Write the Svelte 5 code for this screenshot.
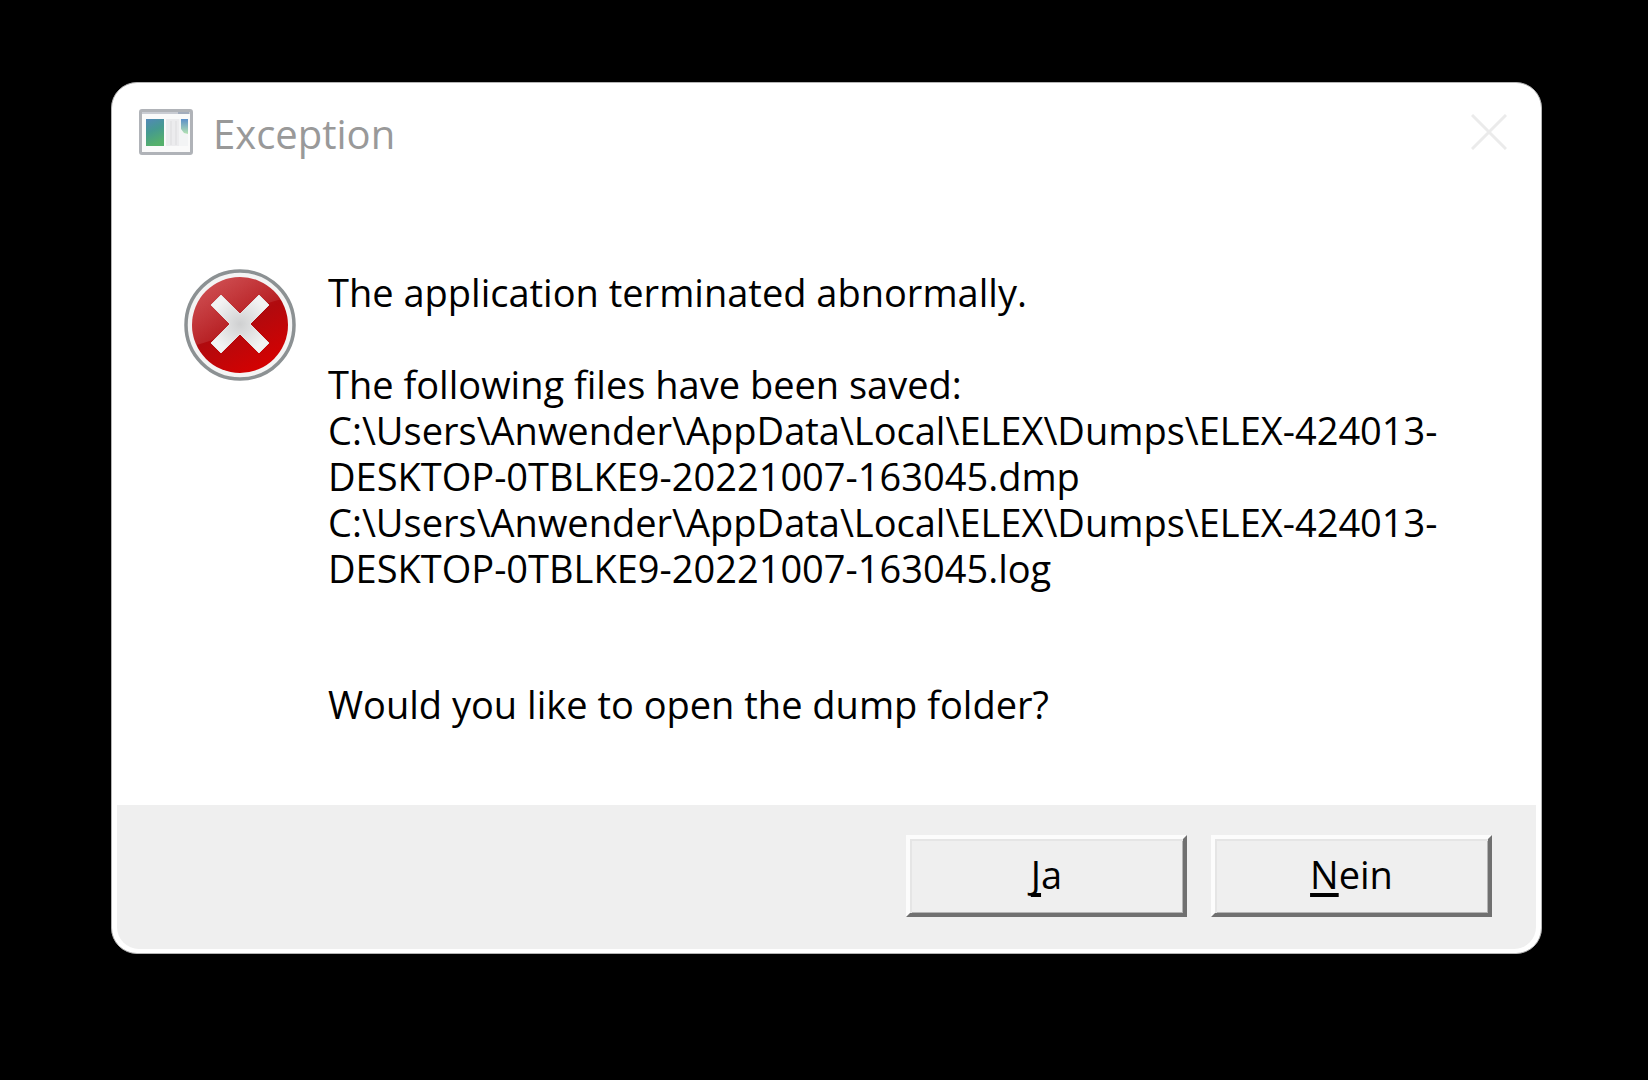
<script lang="ts">
    let open = $state(true);

    const files = [
        ['C:\\Users\\Anwender\\AppData\\Local\\ELEX\\Dumps\\ELEX-424013-', 'DESKTOP-0TBLKE9-20221007-163045.dmp'],
        ['C:\\Users\\Anwender\\AppData\\Local\\ELEX\\Dumps\\ELEX-424013-', 'DESKTOP-0TBLKE9-20221007-163045.log'],
    ];

    function close() {
        open = false;
    }
</script>

{#if open}
    <div class="dialog" role="alertdialog" aria-labelledby="title" aria-describedby="message">
        <header>
            <svg class="app-icon" viewBox="0 0 54 46" aria-hidden="true">
                <defs>
                    <linearGradient id="pane" x1="0" y1="0" x2="0.3" y2="1">
                        <stop offset="0" stop-color="#5288b8" />
                        <stop offset="0.5" stop-color="#459a90" />
                        <stop offset="1" stop-color="#55b06c" />
                    </linearGradient>
                    <linearGradient id="side" x1="0" y1="0" x2="0" y2="1">
                        <stop offset="0" stop-color="#5b8fc9" />
                        <stop offset="1" stop-color="#b5e3b2" />
                    </linearGradient>
                </defs>
                <rect x="1.5" y="1.5" width="51" height="43" rx="1.5" fill="#fafafa" stroke="#b0b3b8" stroke-width="3" />
                <path d="M3 4H51" stroke="#c9ccd3" stroke-width="2" />
                <path d="M39 4H50" stroke="#a3adbd" stroke-width="2" />
                <rect x="7" y="10" width="18" height="27" fill="url(#pane)" />
                <rect x="27" y="10" width="13" height="27" fill="#ececee" />
                <path d="M32 12V36M37 12V36" stroke="#e4e4e6" stroke-width="2" />
                <rect x="40" y="10" width="9" height="27" fill="#f3f4f5" />
                <path d="M42 10H49V25L45 24L42 20Z" fill="url(#side)" />
            </svg>
            <h1 id="title">Exception</h1>
            <button class="close" aria-label="Close" onclick={close}>
                <svg viewBox="0 0 36 36" aria-hidden="true">
                    <path d="M1 1L35 35M35 1L1 35" stroke="#ebebeb" stroke-width="3" />
                </svg>
            </button>
        </header>

        <div class="content">
            <svg class="error-icon" viewBox="0 0 112 112" aria-hidden="true">
                <defs>
                    <linearGradient id="red" x1="0.2" y1="0" x2="0.75" y2="1">
                        <stop offset="0" stop-color="#c4262a" />
                        <stop offset="0.5" stop-color="#b00a0e" />
                        <stop offset="1" stop-color="#d80000" />
                    </linearGradient>
                    <linearGradient id="gloss" x1="0" y1="0" x2="0.8" y2="0.8">
                        <stop offset="0" stop-color="#fff" stop-opacity="0.24" />
                        <stop offset="1" stop-color="#fff" stop-opacity="0.04" />
                    </linearGradient>
                    <radialGradient id="cross">
                        <stop offset="0" stop-color="#cfd0d1" />
                        <stop offset="1" stop-color="#f2f3f3" />
                    </radialGradient>
                    <clipPath id="disc"><circle cx="56" cy="56" r="48" /></clipPath>
                </defs>
                <circle cx="56" cy="56" r="54" fill="#f4f4f4" stroke="#8c9193" stroke-width="3.5" />
                <circle cx="56" cy="56" r="48" fill="url(#red)" />
                <path d="M0 0H112V28C84 30 66 42 52 56C40 67 24 75 0 78Z" fill="url(#gloss)" clip-path="url(#disc)" />
                <path
                    d="M37 26L56 45L75 26L85 36L66 55L85 74L75 84L56 65L37 84L27 74L46 55L27 36Z"
                    fill="url(#cross)" stroke="#e3e4e4" stroke-width="1" stroke-linejoin="round"
                />
            </svg>

            <div class="message" id="message">
                <p>The application terminated abnormally.</p>
                <p>
                    The following files have been saved:
                    {#each files as file}
                        {#each file as part}
                            <span class="path">{part}</span>
                        {/each}
                    {/each}
                </p>
                <p class="question">Would you like to open the dump folder?</p>
            </div>
        </div>

        <footer>
            <button class="choice" onclick={close}><u>J</u>a</button>
            <button class="choice" onclick={close}><u>N</u>ein</button>
        </footer>
    </div>
{/if}

<style>
    :global(body) {
        background: #000;
    }

    .dialog {
        display: flex;
        flex-direction: column;
        margin: 82px 106px 82px 111px;
        border: 1px solid #b4b4b4;
        border-radius: 26px;
        background: #fff;
        color: #000;
        font-family: "Open Sans", "Noto Sans", sans-serif;
        font-size: 38px;
        line-height: 46px;
        overflow: hidden;
    }

    header {
        display: flex;
        align-items: center;
        gap: 20px;
        padding: 24px 34px 0 27px;
    }

    .app-icon {
        width: 54px;
        height: 46px;
    }

    h1 {
        flex: 1;
        margin: 0;
        padding-top: 4px;
        color: #999;
        font-size: 40px;
        font-weight: 400;
    }

    .close {
        width: 36px;
        height: 36px;
        padding: 0;
        border: none;
        background: none;
    }

    .close svg {
        display: block;
    }

    .content {
        display: flex;
        align-items: flex-start;
        gap: 32px;
        padding: 112px 40px 78px 72px;
    }

    .error-icon {
        flex: none;
        width: 112px;
        height: 112px;
    }

    .message {
        white-space: nowrap;
    }

    p {
        margin: 0 0 46px;
    }

    .path {
        display: block;
    }

    .question {
        margin: 90px 0 0;
    }

    footer {
        display: flex;
        justify-content: flex-end;
        gap: 24px;
        margin: 0 5px 4px;
        padding: 30px 44px 32px;
        border-radius: 0 0 22px 22px;
        background: #efefef;
    }

    .choice {
        width: 281px;
        height: 82px;
        padding: 0 0 4px;
        border: 4px solid;
        border-color: #fcfcfc #707070 #707070 #fcfcfc;
        background: #efefef;
        box-shadow: inset 2px 2px #e5e5e5, inset -1px -1px #b4b4b4;
        color: #000;
        font: inherit;
    }

    u {
        text-decoration-skip-ink: none;
        text-decoration-thickness: 4px;
        text-underline-offset: 4px;
    }
</style>
